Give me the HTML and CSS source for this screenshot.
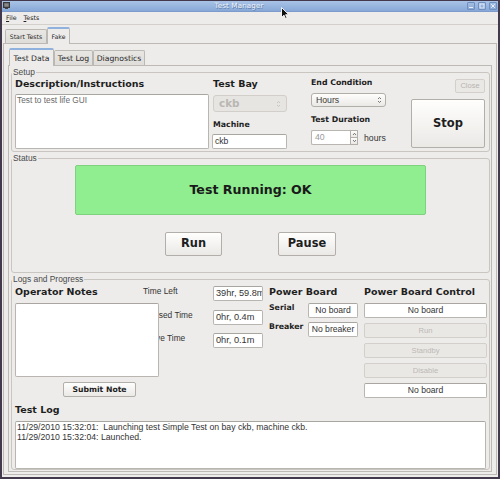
FILE: index.html
```html
<!DOCTYPE html>
<html>
<head>
<meta charset="utf-8">
<title>Test Manager</title>
<link rel="stylesheet" href="styles.css">
</head>
<body>
<div class="window">
  <div class="titlebar">
    <span class="app-icon">
      <svg width="7" height="7" viewBox="0 0 7 7"><rect x="0.5" y="0.5" width="6" height="5" fill="#5b5b5b" stroke="#3a3a3a"/><rect x="1.5" y="1.5" width="4" height="3" fill="#8a8a8a"/><rect x="2" y="6" width="3" height="1" fill="#444"/></svg>
    </span>
    <span class="title">Test Manager</span>
    <div class="wm-buttons">
      <span class="wm-btn"><svg width="6" height="6" viewBox="0 0 6 6"><rect x="1" y="4" width="4" height="1" fill="#e8eef8"/></svg></span>
      <span class="wm-btn"><svg width="6" height="6" viewBox="0 0 6 6"><rect x="1" y="1" width="4" height="4" fill="none" stroke="#e8eef8" stroke-width="0.9"/></svg></span>
      <span class="wm-btn"><svg width="6" height="6" viewBox="0 0 6 6"><path d="M1.2 1.2 L4.8 4.8 M4.8 1.2 L1.2 4.8" stroke="#e8eef8" stroke-width="1"/></svg></span>
    </div>
    <svg class="cursor" width="9" height="13" viewBox="0 0 9 13"><path d="M0.5 0.5 L0.5 10.5 L3 8.2 L4.6 11.8 L6.1 11.1 L4.6 7.7 L7.8 7.7 Z" fill="#111" stroke="#fff" stroke-width="0.9"/></svg>
  </div>
  <div class="menubar">
    <span class="menu"><u>F</u>ile</span>
    <span class="menu"><u>T</u>ests</span>
  </div>
  <div class="client">
    <div class="tabbar outer-tabs">
      <span class="tab">Start Tests</span>
      <span class="tab active">Fake</span>
    </div>
    <div class="outer-pane">
      <div class="tabbar inner-tabs">
        <span class="tab active">Test Data</span>
        <span class="tab">Test Log</span>
        <span class="tab">Diagnostics</span>
      </div>
      <div class="inner-pane">
        <fieldset class="group setup">
          <legend>Setup</legend>
          <div class="setup-row">
            <div class="col col-desc">
              <div class="h-big">Description/Instructions</div>
              <div class="field desc-box">Test to test life GUI</div>
            </div>
            <div class="col col-bay">
              <div class="h-big bay-label">Test Bay</div>
              <div class="combo combo-disabled">
                <span>ckb</span>
                <svg width="5" height="8" viewBox="0 0 5 8"><path d="M1 3 L2.5 1.5 L4 3 M1 5 L2.5 6.5 L4 5" fill="none" stroke="#c4c2be" stroke-width="0.9"/></svg>
              </div>
              <div class="h-small machine-label">Machine</div>
              <div class="field machine-field">ckb</div>
            </div>
            <div class="col col-end">
              <div class="h-small">End Condition</div>
              <div class="combo combo-hours">
                <span>Hours</span>
                <svg width="5" height="8" viewBox="0 0 5 8"><path d="M1 3 L2.5 1.5 L4 3 M1 5 L2.5 6.5 L4 5" fill="none" stroke="#666" stroke-width="0.9"/></svg>
              </div>
              <div class="h-small duration-label">Test Duration</div>
              <div class="spin-row">
                <div class="spin">
                  <span class="spin-val">40</span>
                  <span class="spin-arrows">
                    <span class="spin-btn"><svg width="5" height="4" viewBox="0 0 5 4"><path d="M1 3 L2.5 1.3 L4 3" fill="none" stroke="#555" stroke-width="0.8"/></svg></span>
                    <span class="spin-btn"><svg width="5" height="4" viewBox="0 0 5 4"><path d="M1 1 L2.5 2.7 L4 1" fill="none" stroke="#555" stroke-width="0.8"/></svg></span>
                  </span>
                </div>
                <span class="unit">hours</span>
              </div>
            </div>
            <div class="col col-actions">
              <div class="btn btn-close">Close</div>
              <div class="btn btn-stop">Stop</div>
            </div>
          </div>
        </fieldset>

        <fieldset class="group status">
          <legend>Status</legend>
          <div class="status-box">Test Running: OK</div>
          <div class="status-buttons">
            <div class="btn btn-run">Run</div>
            <div class="btn btn-pause">Pause</div>
          </div>
        </fieldset>

        <fieldset class="group logs">
          <legend>Logs and Progress</legend>
          <div class="logs-row">
            <div class="notes-col">
              <div class="h-big">Operator Notes</div>
              <div class="field notes-box"></div>
              <div class="btn btn-submit">Submit Note</div>
            </div>
            <div class="times">
              <span class="time-label tl-left">Time Left</span>
              <span class="field time-field">39hr, 59.8m</span>
              <span class="time-label">Elapsed Time</span>
              <span class="field time-field">0hr, 0.4m</span>
              <span class="time-label">Active Time</span>
              <span class="field time-field">0hr, 0.1m</span>
            </div>
            <div class="pb-col">
              <div class="h-big">Power Board</div>
              <div class="pb-row pb-serial">
                <span class="h-small">Serial</span>
                <span class="field pb-field">No board</span>
              </div>
              <div class="pb-row pb-breaker">
                <span class="h-small">Breaker</span>
                <span class="field pb-field">No breaker</span>
              </div>
            </div>
            <div class="pbc-col">
              <div class="h-big">Power Board Control</div>
              <div class="pbc-list">
                <span class="field pbc-field">No board</span>
                <span class="btn pbc-btn">Run</span>
                <span class="btn pbc-btn">Standby</span>
                <span class="btn pbc-btn">Disable</span>
                <span class="field pbc-field">No board</span>
              </div>
            </div>
          </div>
          <div class="h-big log-label">Test Log</div>
          <div class="field log-box">
            <div>11/29/2010 15:32:01:&nbsp; Launching test Simple Test on bay ckb, machine ckb.</div>
            <div>11/29/2010 15:32:04: Launched.</div>
          </div>
        </fieldset>
      </div>
    </div>
  </div>
</div>
</body>
</html>
```

FILE: styles.css
```css
* { box-sizing: border-box; }
html, body { margin: 0; padding: 0; }
body {
  width: 500px;
  height: 479px;
  overflow: hidden;
  background: #3f3548;
  font-family: "DejaVu Sans", sans-serif;
  color: #222;
}

.window {
  position: relative;
  width: 500px;
  height: 479px;
  display: flex;
  flex-direction: column;
  border: 2px solid #43394d;
  border-top-width: 1px;
  background: #edecea;
}

/* title bar */
.titlebar {
  height: 11px;
  display: flex;
  align-items: center;
  background: linear-gradient(#a9c3e6, #87a8d7);
  border-bottom: 1px solid #7d9ccb;
}
.app-icon { display: flex; width: 8px; height: 8px; margin-left: 1px; }
.title {
  flex: 1;
  text-align: center;
  font: 7.2px/10px "DejaVu Sans", sans-serif;
  color: #eef3fb;
  text-shadow: 0.6px 0.6px 0 #5d7aa8;
  letter-spacing: 0.1px;
}
.wm-buttons { display: flex; gap: 3px; margin-right: 1px; }
.wm-btn {
  width: 8px; height: 8px;
  display: flex; align-items: center; justify-content: center;
  border: 1px solid #6f8fc0;
  border-radius: 1px;
  background: linear-gradient(#a4bde2, #8aa9d6);
}
.cursor { position: absolute; left: 279px; top: 6px; }

/* menu */
.menubar {
  height: 13px;
  display: flex;
  align-items: center;
  gap: 7px;
  padding-left: 4px;
  border-bottom: 1px solid #d3d0cb;
  font: 6.3px/10px "DejaVu Sans", sans-serif;
  color: #222;
}

.client {
  flex: 1;
  display: flex;
  flex-direction: column;
  padding: 2px 1px 2px 1px;
  min-height: 0;
}

/* tabs */
.tabbar { display: flex; align-items: flex-end; }
.tab {
  display: flex; align-items: center; justify-content: center;
  border: 1px solid #bcb9b4;
  border-bottom: none;
  border-radius: 2px 2px 0 0;
  background: linear-gradient(#e9e7e4, #dfddd9);
  color: #2a2a2a;
}
.tab.active {
  position: relative;
  z-index: 1;
  background: #edecea;
  border-top: 2px solid #8fb1de;
  margin-bottom: -1px;
}
.outer-tabs { height: 16px; padding-left: 2px; }
.outer-tabs .tab { height: 14px; font-size: 6.2px; }
.outer-tabs .tab:first-child { width: 42px; }
.outer-tabs .tab.active { width: 23px; height: 17px; }

.outer-pane {
  flex: 1;
  min-height: 0;
  display: flex;
  flex-direction: column;
  border: 1px solid #bdbab5;
  padding: 4px 4px 2px 4px;
}
.inner-tabs { height: 17px; padding-left: 1px; }
.inner-tabs .tab { height: 15px; font-size: 7.7px; }
.inner-tabs .tab:nth-child(1) { width: 45px; height: 18px; }
.inner-tabs .tab:nth-child(2) { width: 39px; }
.inner-tabs .tab:nth-child(3) { width: 52px; }

.inner-pane {
  flex: 1;
  min-height: 0;
  display: flex;
  flex-direction: column;
  border: 1px solid #bdbab5;
  padding: 1px 1px 1px 2px;
}

/* group boxes */
.group {
  margin: 0;
  min-inline-size: 0;
  border: 1px solid #c9c6c1;
  border-radius: 3px;
  padding: 0 0 0 3px;
}
.group legend {
  font: 8.4px/10px "Liberation Sans", sans-serif;
  color: #4a4a4a;
  padding: 0 1px;
  margin-left: -3px;
}
.setup { padding-top: 1px; padding-bottom: 2px; }
.status { margin-top: 1px; padding: 2px 3px 16px 3px; }
.logs { margin-top: 1px; padding-top: 0; flex: 1; display: flex; flex-direction: column; overflow: hidden; }

.h-big { font: bold 9.5px/12px "DejaVu Sans", sans-serif; color: #1e1e1e; }
.h-small { font: bold 7.8px/10px "DejaVu Sans", sans-serif; color: #1e1e1e; }

.field {
  display: block;
  background: #fff;
  border: 1px solid #b9b6b1;
  border-top-color: #a9a6a1;
  border-radius: 2px;
  font: 8.6px/13px "Liberation Sans", sans-serif;
  color: #333;
  padding: 0 2px;
  white-space: nowrap;
  overflow: hidden;
}

.btn {
  display: flex; align-items: center; justify-content: center;
  background: linear-gradient(#fefefd, #ebe9e6);
  border: 1px solid #b2afaa;
  border-radius: 2px;
  color: #1e1e1e;
  font: bold 11.4px/1 "DejaVu Sans", sans-serif;
}

/* setup row */
.setup-row { display: flex; }
.col { display: flex; flex-direction: column; }
.col-desc { width: 194px; }
.desc-box {
  margin-top: 4px;
  height: 55px;
  padding: 0 1px;
  color: #6a6a6a;
  font-size: 8.3px;
  line-height: 11px;
}
.col-bay { width: 76px; margin-left: 3px; }
.bay-label { padding-left: 1px; }
.combo {
  display: flex; align-items: center; justify-content: space-between;
  border-radius: 3px;
}
.combo-disabled {
  margin: 5px 0 0 1px;
  width: 74px; height: 17px;
  background: #e7e5e2;
  border: 1px solid #d2cfcb;
  padding: 0 5px 0 5px;
  font: bold 10.4px/1 "DejaVu Sans", sans-serif;
  color: #b9b7b3;
}
.machine-label { margin-top: 8px; padding-left: 1px; }
.machine-field { margin-top: 4px; height: 15px; width: 75px; }

.col-end { width: 76px; margin-left: 23px; }
.combo-hours {
  margin-top: 5px;
  width: 75px; height: 14px;
  background: linear-gradient(#fefefd, #ebe9e6);
  border: 1px solid #b2afaa;
  padding: 0 3px 0 4px;
  font: 8.7px/1 "Liberation Sans", sans-serif;
  color: #3a3a3a;
}
.duration-label { margin-top: 8px; }
.spin-row { margin-top: 5px; display: flex; align-items: center; }
.spin { display: flex; width: 47px; height: 15px; }
.spin-val {
  flex: 1;
  background: #fff;
  border: 1px solid #b9b6b1;
  border-right: none;
  border-radius: 2px 0 0 2px;
  font: 8.7px/13px "Liberation Sans", sans-serif;
  color: #9a9a9a;
  padding-left: 3px;
}
.spin-arrows { width: 8px; display: flex; flex-direction: column; }
.spin-btn {
  flex: 1;
  display: flex; align-items: center; justify-content: center;
  border: 1px solid #b2afaa;
  background: linear-gradient(#fdfdfc, #e9e7e4);
}
.spin-btn + .spin-btn { border-top: none; }
.unit { margin-left: 6px; font: 8.7px/1 "Liberation Sans", sans-serif; color: #333; padding-top: 1px; }

.col-actions { width: 74px; margin-left: 24px; }
.btn-close {
  align-self: flex-end;
  margin-top: 1px;
  width: 30px; height: 14px;
  border-color: #d3d0cc;
  background: #eae8e5;
  font: 7.5px/1 "Liberation Sans", sans-serif;
  color: #b7b4b0;
}
.btn-stop { margin-top: 6px; height: 49px; font-size: 11.5px; }

/* status */
.status-box {
  margin: 0 auto;
  width: 351px; height: 50px;
  background: #90ee90;
  border: 1px solid #7fd07f;
  border-radius: 2px;
  display: flex; align-items: center; justify-content: center;
  font: bold 12.6px/1 "DejaVu Sans", sans-serif;
  color: #1a1a1a;
}
.status-buttons { margin-top: 17px; display: flex; justify-content: center; gap: 56px; }
.btn-run { width: 57px; height: 24px; }
.btn-pause { width: 58px; height: 24px; }

/* logs */
.logs-row { display: flex; padding-top: 2px; }
.notes-col { position: relative; z-index: 1; width: 144px; display: flex; flex-direction: column; }
.notes-box { margin-top: 5px; height: 74px; }
.btn-submit {
  margin: 5px 0 0 48px;
  width: 73px; height: 15px;
  font-size: 7.7px;
}
.times {
  margin-left: -17px;
  display: grid;
  grid-template-columns: 71px 50px;
  grid-auto-rows: 15px;
  row-gap: 8.5px;
  align-content: start;
}
.time-label { font: 8.4px/11px "Liberation Sans", sans-serif; color: #333; }
.tl-left { padding-left: 1px; }
.time-field { height: 15px; padding: 0 0 0 2px; font-size: 9.2px; }

.pb-col { margin-left: 6px; width: 89px; display: flex; flex-direction: column; }
.pb-row { display: flex; justify-content: space-between; align-items: flex-start; }
.pb-serial { margin-top: 5px; }
.pb-breaker { margin-top: 4px; }
.pb-field { width: 50px; height: 15px; text-align: center; padding: 0; }

.pbc-col { margin-left: 6px; width: 123px; display: flex; flex-direction: column; }
.pbc-list { margin-top: 5px; display: flex; flex-direction: column; gap: 5px; }
.pbc-field { height: 15px; text-align: center; }
.pbc-btn {
  height: 15px;
  border-color: #d3d0cc;
  background: #eae8e5;
  font: 7.6px/1 "Liberation Sans", sans-serif;
  color: #bcb9b5;
}
.log-label { margin-top: 6px; }
.log-box {
  margin-top: 5px;
  flex: 1;
  margin-right: 3px;
  padding: 0 1px;
  font-size: 8.7px;
  line-height: 10px;
  color: #333;
}
```
